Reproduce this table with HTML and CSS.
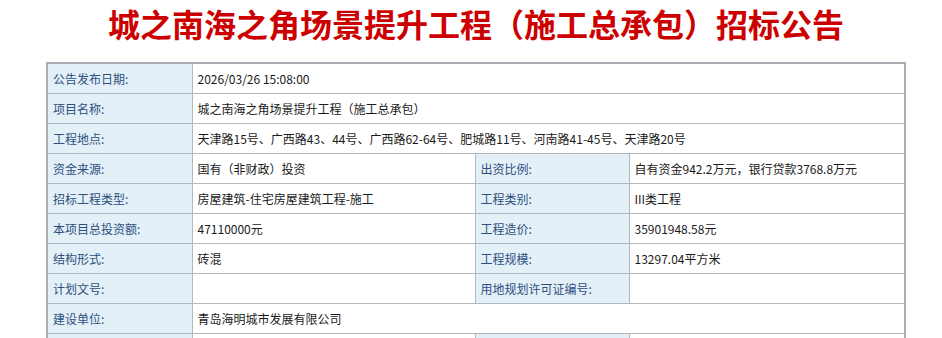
FILE: index.html
```html
<!DOCTYPE html>
<html lang="zh-CN">
<head>
<meta charset="utf-8">
<title>招标公告</title>
<link rel="stylesheet" href="styles.css">
</head>
<body>
<div class="page">
  <h1 class="title">城之南海之角场景提升工程（施工总承包）招标公告</h1>
  <table class="info">
    <colgroup>
      <col class="c1"><col class="c2"><col class="c3"><col class="c4">
    </colgroup>
    <tr><td class="lbl">公告发布日期:</td><td class="val" colspan="3">2026/03/26 15:08:00</td></tr>
    <tr><td class="lbl">项目名称:</td><td class="val" colspan="3">城之南海之角场景提升工程（施工总承包）</td></tr>
    <tr><td class="lbl">工程地点:</td><td class="val" colspan="3">天津路15号、广西路43、44号、广西路62-64号、肥城路11号、河南路41-45号、天津路20号</td></tr>
    <tr><td class="lbl">资金来源:</td><td class="val">国有（非财政）投资</td><td class="lbl">出资比例:</td><td class="val">自有资金942.2万元，银行贷款3768.8万元</td></tr>
    <tr><td class="lbl">招标工程类型:</td><td class="val">房屋建筑-住宅房屋建筑工程-施工</td><td class="lbl">工程类别:</td><td class="val">III类工程</td></tr>
    <tr><td class="lbl">本项目总投资额:</td><td class="val">47110000元</td><td class="lbl">工程造价:</td><td class="val">35901948.58元</td></tr>
    <tr><td class="lbl">结构形式:</td><td class="val">砖混</td><td class="lbl">工程规模:</td><td class="val">13297.04平方米</td></tr>
    <tr><td class="lbl">计划文号:</td><td class="val"></td><td class="lbl">用地规划许可证编号:</td><td class="val"></td></tr>
    <tr><td class="lbl">建设单位:</td><td class="val" colspan="3">青岛海明城市发展有限公司</td></tr>
    <tr><td class="lbl"></td><td class="val"></td><td class="lbl"></td><td class="val"></td></tr>
  </table>
</div>
</body>
</html>
```
FILE: styles.css
```css
html, body {
  margin: 0;
  padding: 0;
  background: #ffffff;
}
body {
  font-family: "Noto Sans CJK SC", "Liberation Sans", sans-serif;
}
.page {
  width: 860px;
  margin-left: 46px;
  padding-top: 8px;
}
.title {
  margin: 0 0 24px 0;
  height: 30px;
  line-height: 30px;
  font-size: 32px;
  font-weight: 700;
  color: #cc0000;
  text-align: center;
  white-space: nowrap;
  letter-spacing: 0;
}
.info {
  width: 860px;
  border-collapse: collapse;
  table-layout: fixed;
  border: 2px solid #a9aeb4;
  font-size: 12px;
}
.c1 { width: 145px; }
.c2 { width: 283px; }
.c3 { width: 154px; }
.c4 { width: auto; }
.info td {
  height: 29px;
  padding: 0 5px;
  border: 1px solid #b4b8bd;
  vertical-align: middle;
  white-space: nowrap;
  overflow: hidden;
}
.lbl {
  background: #e3f0f8;
  color: #2e4f7d;
}
.val {
  background: #ffffff;
  color: #1a1a1a;
}
```
